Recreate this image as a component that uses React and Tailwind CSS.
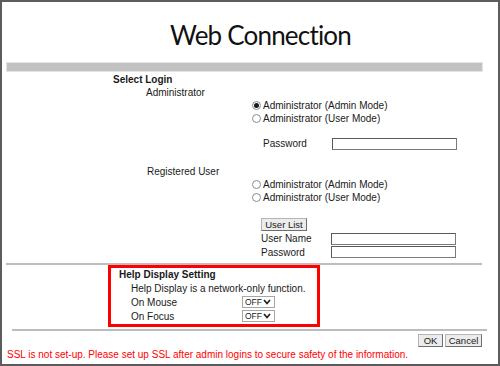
import React from 'react';

function Radio({ checked, label }) {
  return (
    <div className="flex h-[13px] items-center pl-[250px]">
      <span className="flex h-[9px] w-[9px] items-center justify-center rounded-full border border-[#8c8c8c] bg-white">
        {checked && <span className="h-[5px] w-[5px] rounded-full bg-[#1a1a1a]" />}
      </span>
      <span className="ml-[2px]">{label}</span>
    </div>
  );
}

function TextBox() {
  return <div className="h-[12px] w-[125px] border border-[#7a7a7a] border-t-[#5a5a5a] border-l-[#5a5a5a] bg-white" />;
}

function Btn({ children, w }) {
  return (
    <div
      className={`flex h-[13px] items-center justify-center border border-[#b5b5b5] border-r-[#6e6e6e] border-b-[#6e6e6e] bg-[#ececec] text-[9.5px] leading-none ${w}`}
    >
      {children}
    </div>
  );
}

function OffSelect() {
  return (
    <div className="flex h-[12px] w-[33px] items-center justify-between border border-[#a6a6a6] bg-white pl-[2px] pr-[3px] text-[8.5px] leading-none">
      <span>OFF</span>
      <svg width="8" height="6" viewBox="0 0 8 6">
        <polyline points="1,1 4,4.5 7,1" fill="none" stroke="#222" strokeWidth="1.7" />
      </svg>
    </div>
  );
}

export default function App() {
  return (
    <div className="h-[366px] w-[500px] overflow-hidden border-2 border-[#5c5c5c] bg-white font-['Liberation_Sans',Arial,sans-serif] text-[10px] text-[#1a1a1a]">
      {/* title */}
      <div className="flex h-[60px] justify-center pl-[21px] pt-[20px]">
        <h1 className="font-['Lato',sans-serif] text-[26px] font-normal leading-[26px] tracking-[-0.8px] text-[#111]">
          Web Connection
        </h1>
      </div>
      <div className="ml-[4px] h-[10px] w-[477px] border border-[#e4e4e4] bg-[#c2c2c2]" />

      {/* select login */}
      <div className="flex h-[14px] items-center pl-[111px] font-bold">Select Login</div>
      <div className="flex h-[13px] items-center pl-[144px]">Administrator</div>
      <Radio checked label="Administrator (Admin Mode)" />
      <Radio label="Administrator (User Mode)" />
      <div className="mt-[11px] flex h-[15px] items-center pl-[261px]">
        <span className="w-[69px]">Password</span>
        <TextBox />
      </div>

      <div className="mt-[13px] flex h-[14px] items-center pl-[145px]">Registered User</div>
      <Radio label="Administrator (Admin Mode)" />
      <Radio label="Administrator (User Mode)" />
      <div className="mt-[14px] flex pl-[259px]">
        <Btn w="w-[46px]">User List</Btn>
      </div>
      <div className="mt-[1px] flex h-[13px] items-center pl-[259px]">
        <span className="w-[70px]">User Name</span>
        <TextBox />
      </div>
      <div className="flex h-[14px] items-center pl-[259px]">
        <span className="w-[70px]">Password</span>
        <TextBox />
      </div>

      <div className="ml-[4px] mt-[4px] h-[2px] w-[476px] bg-[#bdbdbd]" />

      {/* help display */}
      <div className="ml-[106px] h-[62px] w-[212px] border-[3px] border-[#ff0000]">
        <div className="flex h-[13px] items-center pl-[8px] font-bold">Help Display Setting</div>
        <div className="flex h-[14px] items-center pl-[20px]">Help Display is a network-only function.</div>
        <div className="flex h-[14px] items-center pl-[20px]">
          <span className="w-[111px]">On Mouse</span>
          <OffSelect />
        </div>
        <div className="flex h-[14px] items-center pl-[20px]">
          <span className="w-[111px]">On Focus</span>
          <OffSelect />
        </div>
      </div>

      <div className="ml-[10px] mt-[2px] h-[2px] w-[475px] bg-[#bdbdbd]" />
      <div className="mt-[3px] flex justify-end gap-[2px] pr-[16px]">
        <Btn w="w-[25px]">OK</Btn>
        <Btn w="w-[37px]">Cancel</Btn>
      </div>
      <div className="flex h-[14px] items-center pl-[5px] text-[#ff0000]">
        SSL is not set-up. Please set up SSL after admin logins to secure safety of the information.
      </div>
    </div>
  );
}
